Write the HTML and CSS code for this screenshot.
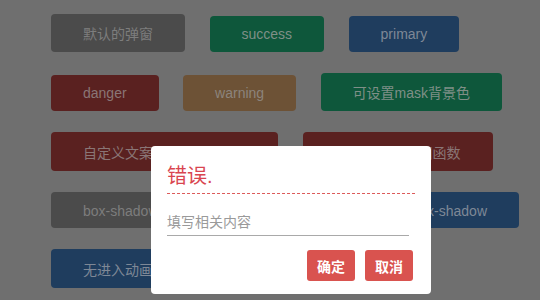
FILE: index.html
```html
<!DOCTYPE html>
<html lang="zh-CN">
<head>
<meta charset="utf-8">
<title>弹窗示例</title>
<link rel="stylesheet" href="styles.css">
</head>
<body>
<main class="page">
  <div class="row">
    <button class="btn cjk gray">默认的弹窗</button>
    <button class="btn green">success</button>
    <button class="btn blue">primary</button>
  </div>
  <div class="row">
    <button class="btn red">danger</button>
    <button class="btn orange">warning</button>
    <button class="btn cjk green">可设置mask背景色</button>
  </div>
  <div class="row">
    <button class="btn cjk tall red w-custom">自定义文案和按钮的文字</button>
    <button class="btn cjk tall red">点击按钮的回调函数</button>
  </div>
  <div class="row">
    <button class="btn gray">box-shadow阴影效果</button>
    <button class="btn blue w-noshadow">去除弹窗的阴影box-shadow</button>
  </div>
  <div class="row">
    <button class="btn cjk tall blue">无进入动画效果</button>
  </div>
</main>

<div class="dialog">
  <div class="dialog-title">错误.</div>
  <input class="dialog-input" type="text" placeholder="填写相关内容">
  <div class="dialog-actions">
    <button class="dialog-btn">确定</button>
    <button class="dialog-btn">取消</button>
  </div>
</div>
</body>
</html>
```

FILE: styles.css
```css
html, body {
  margin: 0;
  padding: 0;
}

body {
  width: 540px;
  height: 300px;
  overflow: hidden;
  background: #6f6f6f;
  font-family: "Liberation Sans", "Noto Sans CJK SC", sans-serif;
  position: relative;
}

.page {
  padding: 14px 0 0 51px;
  display: flex;
  flex-direction: column;
  gap: 21px;
}

.row {
  display: flex;
  align-items: flex-end;
  column-gap: 24.5px;
}

.btn {
  height: 36px;
  padding: 0 32px;
  border: none;
  border-radius: 4px;
  font-family: "Liberation Sans", "Noto Sans CJK SC", sans-serif;
  font-size: 14px;
  color: #7d7d7d;
  white-space: nowrap;
  flex: none;
}

.btn.cjk {
  height: 38px;
}

.btn.tall {
  height: 39px;
}

.btn.w-custom {
  width: 227px;
  text-align: left;
}

.btn.w-noshadow {
  width: 248px;
  text-align: right;
}

.gray { background: #4b4b4b; }
.green { background: #0e573b; color: #7f8f87; }
.blue { background: #1f3d5e; color: #7e8896; }
.red { background: #5a2120; color: #8a7676; }
.orange { background: #6d5236; color: #8c847c; }

.dialog {
  position: absolute;
  left: 151px;
  top: 146px;
  width: 280px;
  height: 148px;
  box-sizing: border-box;
  background: #fff;
  border-radius: 4px;
  padding: 16px 18px 12px 16px;
  display: flex;
  flex-direction: column;
  font-family: "Liberation Sans", "Noto Sans CJK SC", sans-serif;
}

.dialog-title {
  font-size: 20px;
  line-height: 28px;
  color: #d9454f;
  padding-bottom: 3px;
  border-bottom: 1px dashed #dd5a5a;
  margin-right: -2px;
}

.dialog-input {
  margin-top: 14px;
  width: 242px;
  height: 28px;
  box-sizing: border-box;
  border: none;
  border-bottom: 1px solid #a9a9a9;
  padding: 0;
  font-family: "Liberation Sans", "Noto Sans CJK SC", sans-serif;
  font-size: 14px;
  outline: none;
}

.dialog-input::placeholder {
  color: #9a9a9a;
}

.dialog-actions {
  margin-top: 14px;
  display: flex;
  justify-content: flex-end;
  gap: 10px;
}

.dialog-btn {
  width: 48px;
  height: 31px;
  padding: 0;
  border: none;
  border-radius: 3px;
  background: #d9534f;
  color: #fff;
  font-family: "Liberation Sans", "Noto Sans CJK SC", sans-serif;
  font-size: 14px;
  font-weight: bold;
}
```
